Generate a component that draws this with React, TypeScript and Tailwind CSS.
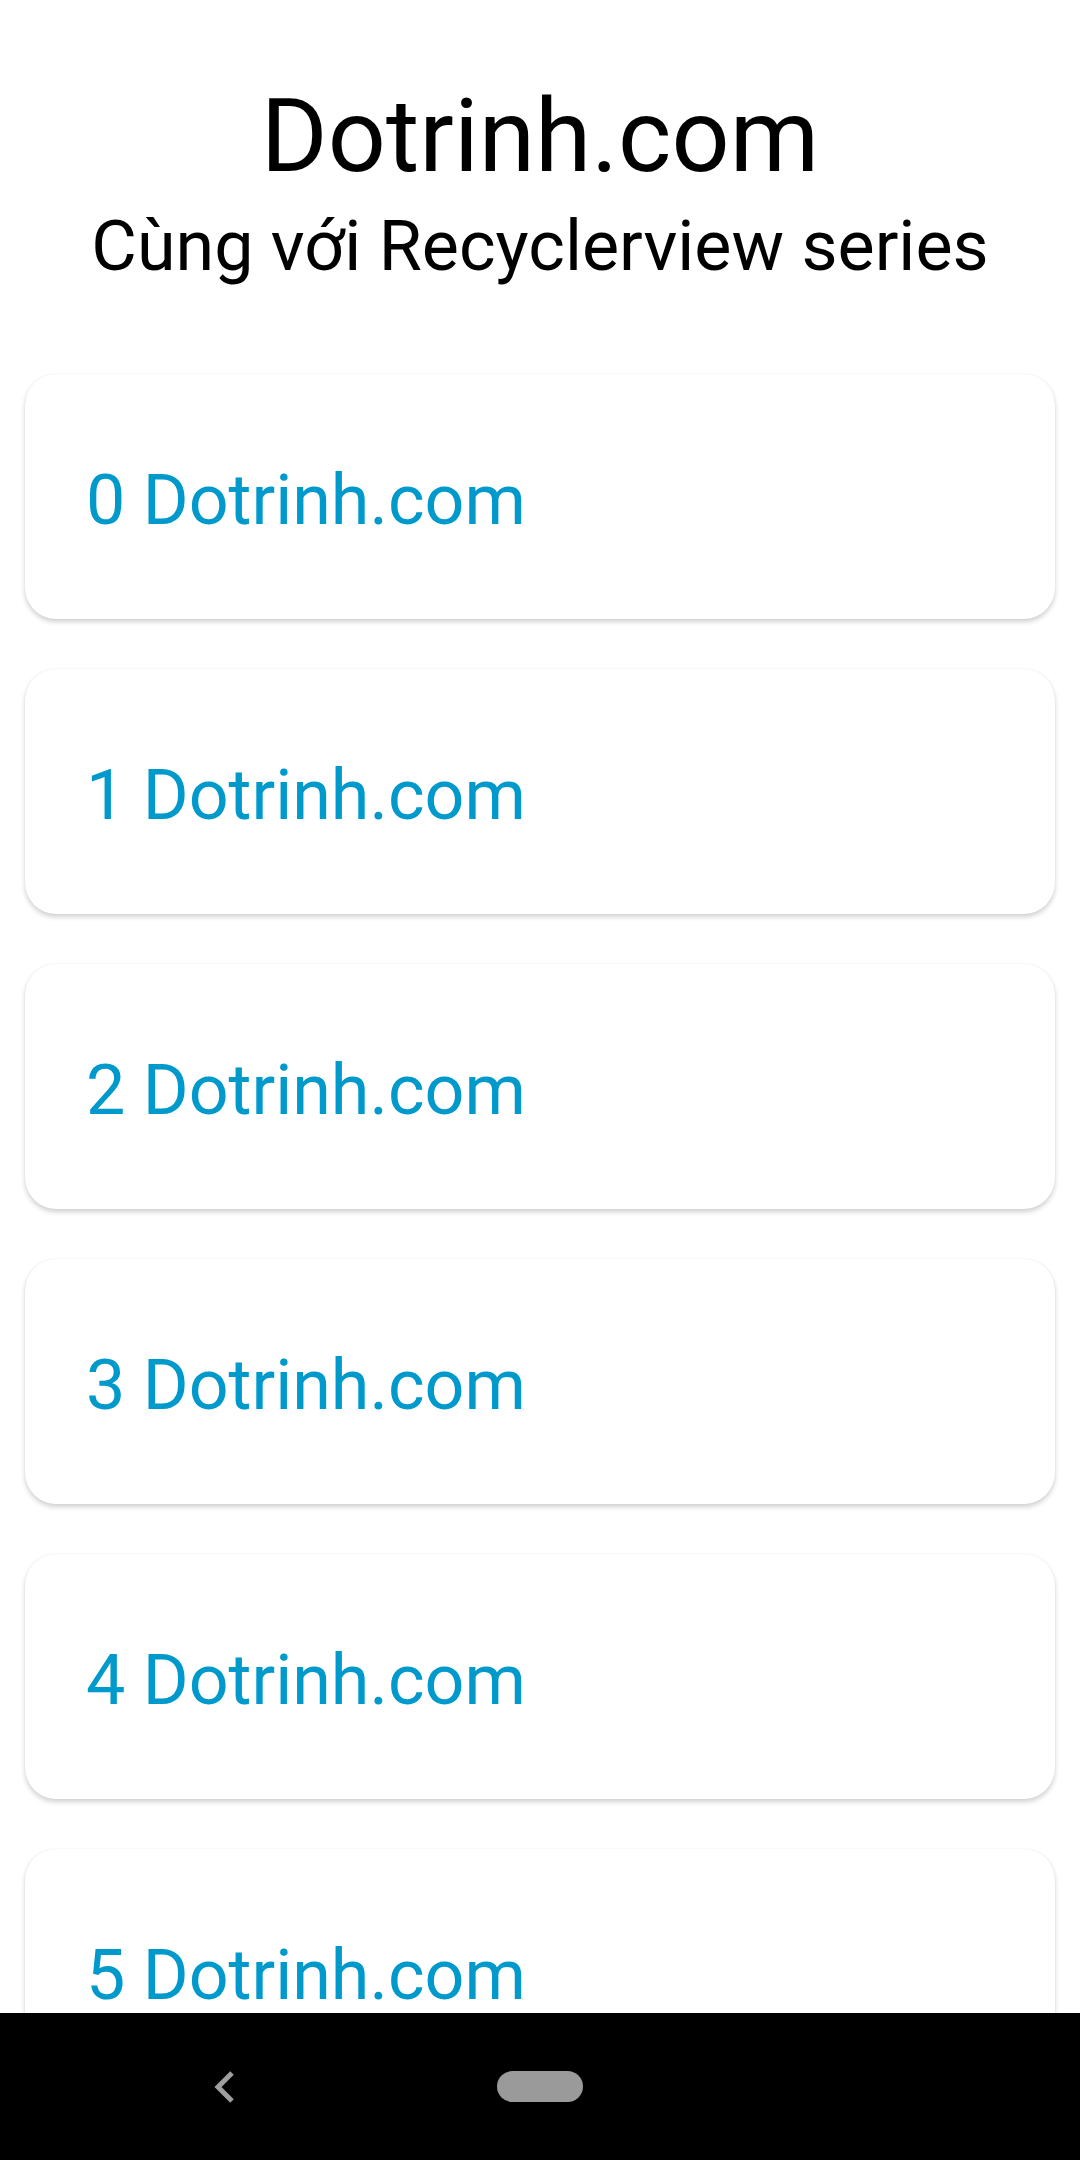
import React from "react";

export default function App() {
  const items = [0, 1, 2, 3, 4, 5, 6];
  return (
    <div
      className="w-[1080px] h-[2160px] flex flex-col overflow-hidden bg-white"
      style={{ fontFamily: "Roboto, 'Noto Sans', sans-serif" }}
    >
      <div className="flex flex-col items-center pt-[76px] text-black">
        <div className="text-[102px] leading-[120px]">Dotrinh.com</div>
        <div className="text-[70px] leading-[82px] mt-[9px]">Cùng với Recyclerview series</div>
      </div>
      <div className="flex-1 overflow-hidden flex flex-col gap-[50px] pt-[87px] px-[25px]">
        {items.map((i) => (
          <div
            key={i}
            className="shrink-0 h-[245px] rounded-[31px] bg-white flex items-center pl-[61px] shadow-[0_3px_5px_rgba(0,0,0,0.18),0_0_1px_rgba(0,0,0,0.12)]"
          >
            <span className="text-[70px] leading-none text-[#0099cc] pt-[6px]">{i} Dotrinh.com</span>
          </div>
        ))}
      </div>
      <div className="h-[147px] shrink-0 bg-black relative flex items-center justify-center">
        <svg className="absolute left-[211px] top-[57px]" width="26" height="34" viewBox="0 0 26 34">
          <path d="M21 3 L7 17 L21 31" stroke="#9e9e9e" strokeWidth="5" fill="none" />
        </svg>
        <div className="w-[86px] h-[31px] rounded-full bg-[#9a9a9a]" />
      </div>
    </div>
  );
}
